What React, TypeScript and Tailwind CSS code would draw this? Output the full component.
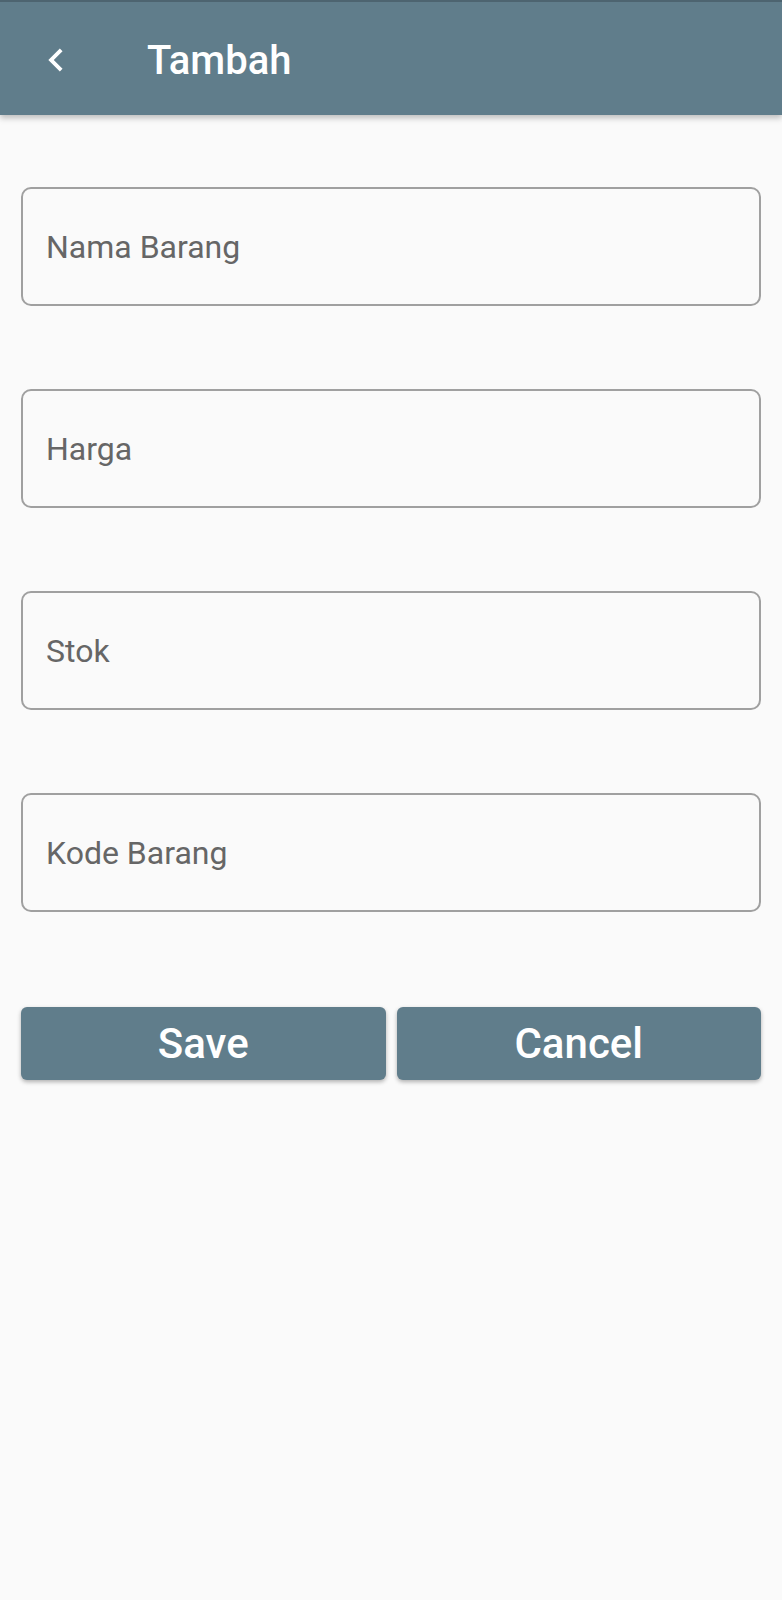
import React from 'react';

const fields = ['Nama Barang', 'Harga', 'Stok', 'Kode Barang'];

export default function App() {
    return (
        <div className="min-h-[1600px] bg-[#fafafa]" style={{ fontFamily: 'Roboto, "Noto Sans", sans-serif' }}>
            {/* App bar */}
            <div className="h-[115px] bg-[#607d8b] border-t-2 border-[#4d6470] flex items-center shadow-[0_3px_6px_rgba(0,0,0,0.25)] relative z-10">
                <button className="w-[46px] h-[46px] ml-[33px] mt-[2px] flex items-center justify-center">
                    <svg viewBox="0 0 24 24" width="46" height="46" fill="white">
                        <path d="M15.41 7.41L14 6l-6 6 6 6 1.41-1.41L10.83 12z" />
                    </svg>
                </button>
                <h1 className="ml-[68px] mt-[5px] text-[40px] font-medium text-white leading-none">Tambah</h1>
            </div>

            <div className="px-[21px] pt-[72px]">
                {/* Form fields */}
                <div className="flex flex-col gap-[83px]">
                    {fields.map((f) => (
                        <input
                            key={f}
                            placeholder={f}
                            className="h-[119px] w-full rounded-[10px] border-2 border-[#a0a0a0] bg-transparent px-[23px] text-[32px] text-[#555] placeholder:text-[#666] outline-none"
                        />
                    ))}
                </div>

                {/* Actions */}
                <div className="mt-[95px] grid grid-cols-2 gap-[11px]">
                    <button className="h-[73px] rounded-[6px] bg-[#607d8b] text-white text-[42px] font-medium shadow-[0_2px_4px_rgba(0,0,0,0.3)]">
                        Save
                    </button>
                    <button className="h-[73px] rounded-[6px] bg-[#607d8b] text-white text-[42px] font-medium shadow-[0_2px_4px_rgba(0,0,0,0.3)]">
                        Cancel
                    </button>
                </div>
            </div>
        </div>
    );
}
